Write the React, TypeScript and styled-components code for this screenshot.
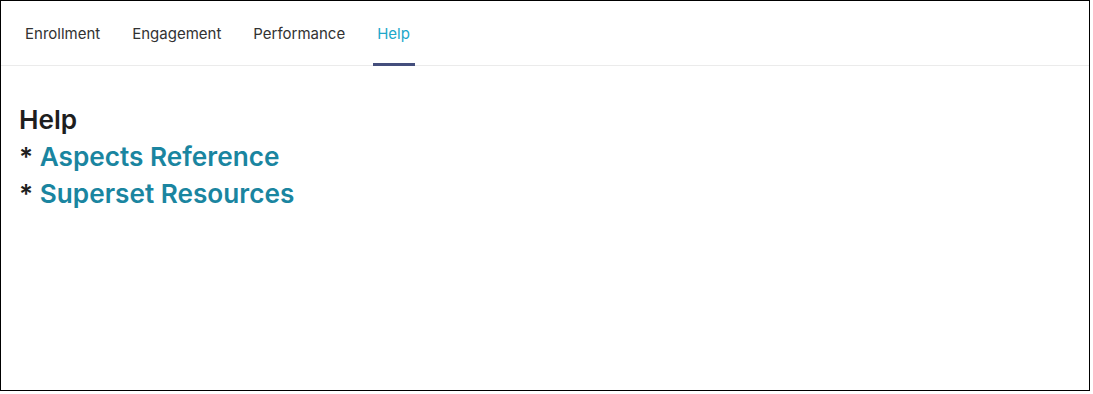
import React from "react";
import styled, { createGlobalStyle } from "styled-components";

const Global = createGlobalStyle`
  html, body { margin: 0; padding: 0; background: #fff; }
  body { font-family: Inter, "Noto Sans", sans-serif; }
`;

const Frame = styled.div`
  box-sizing: border-box;
  width: 1090px;
  height: 391px;
  border: 1px solid #000;
  background: #fff;
  display: flex;
  flex-direction: column;
`;

const TabBar = styled.nav`
  display: flex;
  align-items: stretch;
  height: 64px;
  padding-left: 20px;
  gap: 24px;
  border-bottom: 1px solid #ebebeb;
`;

const Tab = styled.div<{ $active?: boolean }>`
  position: relative;
  display: flex;
  align-items: center;
  padding: 0 4px;
  font-size: 15px;
  color: ${(p) => (p.$active ? "#20a7c9" : "#323232")};
  cursor: pointer;
  &::after {
    content: "";
    position: absolute;
    left: 0;
    right: -1px;
    bottom: -1px;
    height: 3px;
    background: ${(p) => (p.$active ? "#444e7c" : "transparent")};
  }
`;

const Content = styled.div`
  padding: 35px 18px 0;
`;

const Heading = styled.div`
  font-size: 26.2px;
  line-height: 37px;
  font-weight: 600;
  color: #1e1e1e;
`;

const Line = styled.div`
  font-size: 26.2px;
  line-height: 37px;
  font-weight: 600;
  color: #1e1e1e;
`;

const Link = styled.a`
  color: #1a85a0;
  text-decoration: none;
  font-weight: 600;
`;

export default function App() {
  const tabs = ["Enrollment", "Engagement", "Performance", "Help"];
  return (
    <>
      <Global />
      <Frame>
        <TabBar>
          {tabs.map((t) => (
            <Tab key={t} $active={t === "Help"}>
              {t}
            </Tab>
          ))}
        </TabBar>
        <Content>
          <Heading>Help</Heading>
          <Line>
            * <Link href="#">Aspects Reference</Link>
          </Line>
          <Line>
            * <Link href="#">Superset Resources</Link>
          </Line>
        </Content>
      </Frame>
    </>
  );
}
